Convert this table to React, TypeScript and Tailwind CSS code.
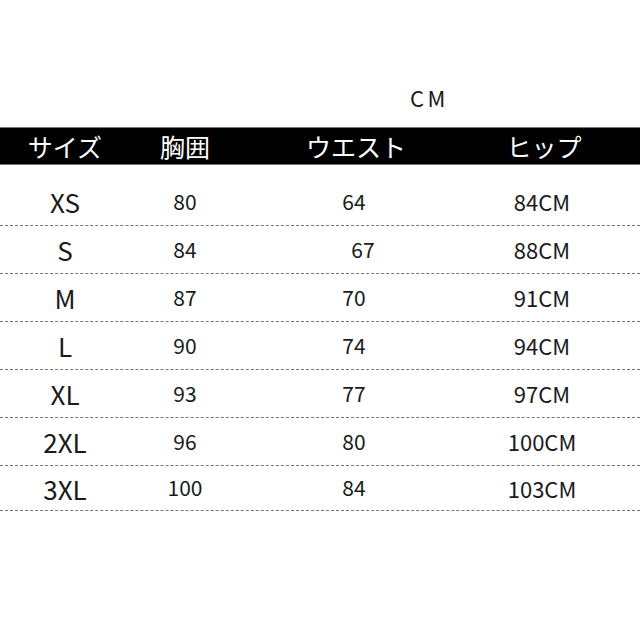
const FONT = "font-['Noto_Sans_CJK_JP','Noto_Sans',sans-serif]"

interface SizeRow {
  readonly size: string
  readonly chest: string
  readonly waist: string
  readonly hip: string
  readonly waistShift?: boolean
}

const rows: ReadonlyArray<SizeRow> = [
  { size: 'XS', chest: '80', waist: '64', hip: '84CM' },
  { size: 'S', chest: '84', waist: '67', hip: '88CM', waistShift: true },
  { size: 'M', chest: '87', waist: '70', hip: '91CM' },
  { size: 'L', chest: '90', waist: '74', hip: '94CM' },
  { size: 'XL', chest: '93', waist: '77', hip: '97CM' },
  { size: '2XL', chest: '96', waist: '80', hip: '100CM' },
  { size: '3XL', chest: '100', waist: '84', hip: '103CM' },
]

const cols = 'grid grid-cols-[130px_110px_228px_148px]'

export default function App() {
  return (
    <div className={`w-[640px] h-[640px] bg-white text-[#1a1a1a] ${FONT}`}>
      <div className="h-[127px] pt-[82px] pl-[410px]">
        <span className="text-[22px] leading-[30px] tracking-[0.16em]">CM</span>
      </div>

      <div className={`${cols} h-[38px] items-center bg-black border-y border-[#777] text-white text-[25px] leading-none`}>
        <div className="text-center">サイズ</div>
        <div className="text-center">胸囲</div>
        <div className="text-center pl-1">ウエスト</div>
        <div className="text-center pl-1">ヒップ</div>
      </div>

      <div className="pt-[13px]">
        {rows.map((r, i) => (
          <div
            key={r.size}
            className={`${cols} items-center border-b border-dashed border-[#777] ${
              i === rows.length - 1 ? 'h-[45px]' : 'h-[48px]'
            }`}
          >
            <div className="text-center text-[26px]">{r.size}</div>
            <div className="text-center text-[21px]">{r.chest}</div>
            <div className={`text-center text-[21px] ${r.waistShift ? 'pl-[18px]' : ''}`}>{r.waist}</div>
            <div className="text-center text-[22px]">{r.hip}</div>
          </div>
        ))}
      </div>
    </div>
  )
}
